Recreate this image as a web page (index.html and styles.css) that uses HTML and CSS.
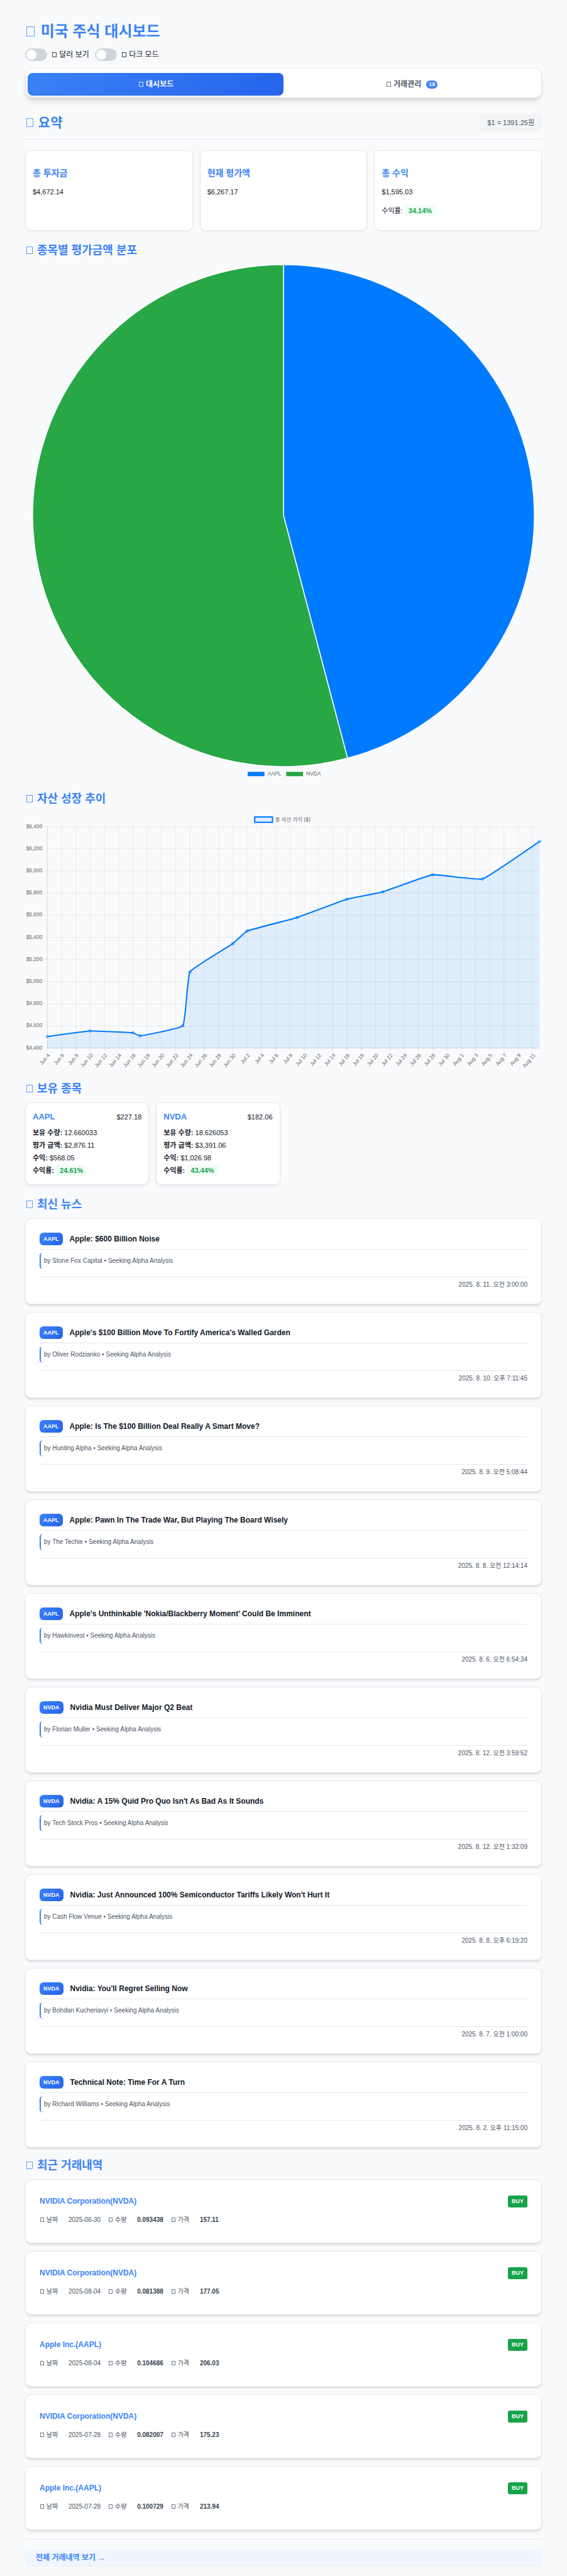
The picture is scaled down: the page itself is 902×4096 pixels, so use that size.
FILE: index.html
```html
<!DOCTYPE html>
<html lang="ko">
<head>
<meta charset="utf-8">
<meta name="viewport" content="width=device-width, initial-scale=1">
<title>미국 주식 대시보드</title>
<link rel="stylesheet" href="styles.css">
</head>
<body>
<main class="page">
  <header class="page-header">
    <h1 class="page-title"><i class="glyph"></i> 미국 주식 대시보드</h1>
    <div class="toggles">
      <label class="toggle"><input class="switch" type="checkbox"><span><i class="glyph"></i> 달러 보기</span></label>
      <label class="toggle"><input class="switch" type="checkbox"><span><i class="glyph"></i> 다크 모드</span></label>
    </div>
  </header>

  <nav class="tabs">
    <button class="tab tab-active" type="button"><span><i class="glyph"></i> 대시보드</span></button>
    <button class="tab" type="button"><span><i class="glyph"></i> 거래관리</span> <span class="tab-count">19</span></button>
  </nav>

  <section>
    <div class="summary-header">
      <h2 class="summary-title"><i class="glyph"></i> 요약</h2>
      <span class="rate">$1 = 1391.25원</span>
    </div>
    <div class="summary-grid">
      <article class="card summary-card"><h3>총 투자금</h3><p>$4,672.14</p></article>
      <article class="card summary-card"><h3>현재 평가액</h3><p>$6,267.17</p></article>
      <article class="card summary-card"><h3>총 수익</h3><p>$1,595.03</p><p class="rate-row">수익률: <span class="gain">34.14%</span></p></article>
    </div>
  </section>

  <section>
    <h2 class="section-title"><i class="glyph"></i> 종목별 평가금액 분포</h2>
    <svg class="chart" id="pie" viewBox="0 0 1168 1168" role="img" aria-label="종목별 평가금액 분포"></svg>
  </section>

  <section>
    <h2 class="section-title"><i class="glyph"></i> 자산 성장 추이</h2>
    <svg class="chart" id="growth" viewBox="0 0 1168 584" role="img" aria-label="자산 성장 추이"></svg>
  </section>

  <section>
    <h2 class="section-title"><i class="glyph"></i> 보유 종목</h2>
    <div class="holding-grid">
      <article class="card holding">
        <div class="holding-head"><h3>AAPL</h3><span>$227.18</span></div>
        <p><strong>보유 수량:</strong> 12.660033</p>
        <p><strong>평가 금액:</strong> $2,876.11</p>
        <p><strong>수익:</strong> $568.05</p>
        <p><strong>수익률:</strong> <span class="gain">24.61%</span></p>
      </article>
      <article class="card holding">
        <div class="holding-head"><h3>NVDA</h3><span>$182.06</span></div>
        <p><strong>보유 수량:</strong> 18.626053</p>
        <p><strong>평가 금액:</strong> $3,391.06</p>
        <p><strong>수익:</strong> $1,026.98</p>
        <p><strong>수익률:</strong> <span class="gain">43.44%</span></p>
      </article>
    </div>
  </section>

  <section>
    <h2 class="section-title"><i class="glyph"></i> 최신 뉴스</h2>
    <div class="stack">
      <article class="card news">
        <div class="news-head"><span class="ticker">AAPL</span><h3>Apple: $600 Billion Noise</h3></div>
        <p class="byline">by Stone Fox Capital • Seeking Alpha Analysis</p>
        <time class="news-time">2025. 8. 11. 오전 3:00:00</time>
      </article>
      <article class="card news">
        <div class="news-head"><span class="ticker">AAPL</span><h3>Apple's $100 Billion Move To Fortify America's Walled Garden</h3></div>
        <p class="byline">by Oliver Rodzianko • Seeking Alpha Analysis</p>
        <time class="news-time">2025. 8. 10. 오후 7:11:45</time>
      </article>
      <article class="card news">
        <div class="news-head"><span class="ticker">AAPL</span><h3>Apple: Is The $100 Billion Deal Really A Smart Move?</h3></div>
        <p class="byline">by Hunting Alpha • Seeking Alpha Analysis</p>
        <time class="news-time">2025. 8. 9. 오전 5:08:44</time>
      </article>
      <article class="card news">
        <div class="news-head"><span class="ticker">AAPL</span><h3>Apple: Pawn In The Trade War, But Playing The Board Wisely</h3></div>
        <p class="byline">by The Techie • Seeking Alpha Analysis</p>
        <time class="news-time">2025. 8. 8. 오전 12:14:14</time>
      </article>
      <article class="card news">
        <div class="news-head"><span class="ticker">AAPL</span><h3>Apple's Unthinkable 'Nokia/Blackberry Moment' Could Be Imminent</h3></div>
        <p class="byline">by Hawkinvest • Seeking Alpha Analysis</p>
        <time class="news-time">2025. 8. 6. 오전 6:54:34</time>
      </article>
      <article class="card news">
        <div class="news-head"><span class="ticker">NVDA</span><h3>Nvidia Must Deliver Major Q2 Beat</h3></div>
        <p class="byline">by Florian Muller • Seeking Alpha Analysis</p>
        <time class="news-time">2025. 8. 12. 오전 3:59:52</time>
      </article>
      <article class="card news">
        <div class="news-head"><span class="ticker">NVDA</span><h3>Nvidia: A 15% Quid Pro Quo Isn't As Bad As It Sounds</h3></div>
        <p class="byline">by Tech Stock Pros • Seeking Alpha Analysis</p>
        <time class="news-time">2025. 8. 12. 오전 1:32:09</time>
      </article>
      <article class="card news">
        <div class="news-head"><span class="ticker">NVDA</span><h3>Nvidia: Just Announced 100% Semiconductor Tariffs Likely Won't Hurt It</h3></div>
        <p class="byline">by Cash Flow Venue • Seeking Alpha Analysis</p>
        <time class="news-time">2025. 8. 8. 오후 6:19:20</time>
      </article>
      <article class="card news">
        <div class="news-head"><span class="ticker">NVDA</span><h3>Nvidia: You'll Regret Selling Now</h3></div>
        <p class="byline">by Bohdan Kucheriavyi • Seeking Alpha Analysis</p>
        <time class="news-time">2025. 8. 7. 오전 1:00:00</time>
      </article>
      <article class="card news">
        <div class="news-head"><span class="ticker">NVDA</span><h3>Technical Note: Time For A Turn</h3></div>
        <p class="byline">by Richard Williams • Seeking Alpha Analysis</p>
        <time class="news-time">2025. 8. 2. 오후 11:15:00</time>
      </article>
    </div>
  </section>

  <section>
    <h2 class="section-title"><i class="glyph"></i> 최근 거래내역</h2>
    <div class="stack">
      <article class="card trade">
        <div class="trade-head"><h3>NVIDIA Corporation(NVDA)</h3><span class="side">BUY</span></div>
        <dl class="trade-info"><dt><i class="glyph"></i> 날짜</dt><dd>2025-06-30</dd><dt><i class="glyph"></i> 수량</dt><dd class="num">0.093438</dd><dt><i class="glyph"></i> 가격</dt><dd class="num">157.11</dd></dl>
      </article>
      <article class="card trade">
        <div class="trade-head"><h3>NVIDIA Corporation(NVDA)</h3><span class="side">BUY</span></div>
        <dl class="trade-info"><dt><i class="glyph"></i> 날짜</dt><dd>2025-08-04</dd><dt><i class="glyph"></i> 수량</dt><dd class="num">0.081388</dd><dt><i class="glyph"></i> 가격</dt><dd class="num">177.05</dd></dl>
      </article>
      <article class="card trade">
        <div class="trade-head"><h3>Apple Inc.(AAPL)</h3><span class="side">BUY</span></div>
        <dl class="trade-info"><dt><i class="glyph"></i> 날짜</dt><dd>2025-08-04</dd><dt><i class="glyph"></i> 수량</dt><dd class="num">0.104686</dd><dt><i class="glyph"></i> 가격</dt><dd class="num">206.03</dd></dl>
      </article>
      <article class="card trade">
        <div class="trade-head"><h3>NVIDIA Corporation(NVDA)</h3><span class="side">BUY</span></div>
        <dl class="trade-info"><dt><i class="glyph"></i> 날짜</dt><dd>2025-07-28</dd><dt><i class="glyph"></i> 수량</dt><dd class="num">0.082007</dd><dt><i class="glyph"></i> 가격</dt><dd class="num">175.23</dd></dl>
      </article>
      <article class="card trade">
        <div class="trade-head"><h3>Apple Inc.(AAPL)</h3><span class="side">BUY</span></div>
        <dl class="trade-info"><dt><i class="glyph"></i> 날짜</dt><dd>2025-07-28</dd><dt><i class="glyph"></i> 수량</dt><dd class="num">0.100729</dd><dt><i class="glyph"></i> 가격</dt><dd class="num">213.94</dd></dl>
      </article>
    </div>
    <div class="more"><a class="more-link" href="#all">전체 거래내역 보기 →</a></div>
  </section>
</main>
<script src="charts.js"></script>
</body>
</html>
```
FILE: styles.css
```css
* { box-sizing: border-box; }

body {
  margin: 0;
  background: #f9fafc;
  color: #111827;
  font-family: "Liberation Sans", "Noto Sans CJK KR", sans-serif;
  font-size: 11px;
  line-height: 16px;
}

h1, h2, h3, p, dl, dd { margin: 0; }

.page { padding: 34px 40px 16px; }

/* Hollow box that stands before a label */
.glyph {
  display: inline-block;
  width: 7px;
  height: 8px;
  margin: 0 1px 0 2px;
  border: 1px solid currentColor;
  opacity: 0.8;
}

.page-title .glyph { width: 13px; height: 16px; margin-right: 3px; }
.summary-title .glyph { width: 11px; height: 14px; margin-right: 2px; }
.section-title .glyph { width: 10px; height: 12px; margin-right: 2px; }
.trade-info .glyph { width: 6px; height: 7px; margin: 0 1px; }

.page-title {
  color: #3b82f6;
  font-size: 24px;
  line-height: 32px;
}

.toggles {
  display: flex;
  gap: 9px;
  margin-top: 11px;
}

.toggle {
  display: flex;
  align-items: center;
  gap: 6px;
  font-size: 12px;
}

.switch {
  appearance: none;
  display: flex;
  align-items: center;
  width: 35px;
  height: 20px;
  margin: 0;
  padding: 0 2px;
  border-radius: 10px;
  background: #d1d5db;
}

.switch::before {
  content: "";
  width: 16px;
  height: 16px;
  border-radius: 50%;
  background: #fff;
}

.switch:checked { justify-content: flex-end; background: #3b82f6; }

.tabs {
  display: flex;
  margin-top: 11px;
  padding: 7px 3px 3px;
  border: 1px solid #e5e7eb;
  border-radius: 12px;
  background: #fff;
  box-shadow: 0 7px 11px -2px rgba(0, 0, 0, 0.1), 0 3px 4px -1px rgba(0, 0, 0, 0.08);
}

.tab {
  display: flex;
  flex: 1;
  align-items: center;
  justify-content: center;
  gap: 8px;
  height: 36px;
  padding: 0;
  border: 0;
  border-radius: 8px;
  background: none;
  color: #4b5563;
  font: 600 12px/16px "Liberation Sans", "Noto Sans CJK KR", sans-serif;
}

.tab-active {
  background: linear-gradient(135deg, #3b82f6, #2563eb);
  color: #fff;
  box-shadow: 0 3px 4px -1px rgba(0, 0, 0, 0.1);
}

.tab-count {
  padding: 0 4px;
  border-radius: 7px;
  background: #3b82f6;
  color: #fff;
  font-size: 9px;
  line-height: 13px;
}

.summary-header {
  display: flex;
  align-items: center;
  justify-content: space-between;
  margin-top: 24px;
  padding-bottom: 11px;
  border-bottom: 1px solid #e5e7eb;
}

.summary-title {
  color: #3b82f6;
  font-size: 21px;
  line-height: 28px;
}

.rate {
  padding: 7px 12px;
  border-radius: 6px;
  background: #f3f4f6;
  color: #4b5563;
}

.summary-grid {
  display: grid;
  grid-template-columns: repeat(3, 1fr);
  gap: 11px;
  padding: 17px 0 3px;
}

.card {
  border: 1px solid #e5e7eb;
  border-radius: 9px;
  background: #fff;
}

.summary-card {
  padding: 25px 11px 22px;
  box-shadow: 0 1px 3px rgba(0, 0, 0, 0.07);
}

.summary-card h3 {
  margin-bottom: 12px;
  color: #3b82f6;
  font-size: 14px;
  line-height: 20px;
}

.summary-card .rate-row { margin-top: 13px; line-height: 18px; }

.gain {
  display: inline-block;
  padding: 0 6px;
  border-radius: 4px;
  background: #f0fdf4;
  color: #16a34a;
  font-weight: 700;
  line-height: 18px;
}

.section-title {
  margin: 16px 0 10px;
  color: #3b82f6;
  font-size: 18px;
  line-height: 24px;
}

.chart {
  display: block;
  width: 100%;
  height: auto;
  font-size: 12px;
}

.chart text { fill: #666; }
.grid-line { stroke: rgba(0, 0, 0, 0.1); }
.slice { stroke: #fff; stroke-width: 2; }
.growth-line { fill: none; stroke: #007bff; stroke-width: 3; }
.growth-area { fill: rgba(0, 123, 255, 0.1); }
.growth-point { fill: rgba(0, 123, 255, 0.1); stroke: #007bff; }
.growth-key { fill: rgba(0, 123, 255, 0.1); stroke: #007bff; stroke-width: 3; }

.holding-grid {
  display: grid;
  grid-template-columns: repeat(4, 1fr);
  gap: 11px;
  padding-bottom: 3px;
}

.holding {
  padding: 13px 11px 12px;
  box-shadow: 0 2px 4px rgba(0, 0, 0, 0.07);
}

.holding-head {
  display: flex;
  align-items: center;
  justify-content: space-between;
  margin-bottom: 6px;
  line-height: 18px;
}

.holding-head h3 { color: #3b82f6; font-size: 13px; }
.holding p { line-height: 20px; }

.stack { display: grid; gap: 12px; }

.news, .trade {
  box-shadow: 0 3px 4px -1px rgba(0, 0, 0, 0.12), 0 1px 3px -1px rgba(0, 0, 0, 0.08);
}

.news { padding: 22px 22px 23px; }

.news-head {
  display: flex;
  align-items: center;
  gap: 11px;
  padding-bottom: 6px;
  border-bottom: 1px solid #e5e7eb;
}

.news-head h3 { font-size: 12px; line-height: 18px; }

.ticker {
  padding: 0 6px;
  border-radius: 6px;
  background: linear-gradient(135deg, #3b82f6, #2563eb);
  color: #fff;
  font-size: 9px;
  font-weight: 700;
  line-height: 20px;
}

.byline {
  margin: 5px 0 12px;
  padding-left: 5px;
  border-left: 2px solid #3b82f6;
  border-radius: 5px;
  color: #4b5563;
  font-size: 10px;
  line-height: 26px;
}

.news-time {
  display: block;
  padding-top: 5px;
  border-top: 1px solid #e5e7eb;
  color: #4b5563;
  font-size: 10px;
  line-height: 14px;
  text-align: right;
}

.trade { padding: 22px 22px 28px; }

.trade-head {
  display: flex;
  align-items: center;
  justify-content: space-between;
}

.trade-head h3 { color: #3b82f6; font-size: 12px; line-height: 24px; }

.side {
  padding: 0 6px;
  border-radius: 3px;
  background: #16a34a;
  color: #fff;
  font-size: 9px;
  font-weight: 700;
  line-height: 19px;
}

.trade-info {
  display: flex;
  margin-top: 10px;
  color: #4b5563;
  font-size: 10px;
}

.trade-info dt { width: 46px; }
.trade-info dd { margin-right: 12px; }
.trade-info .num { color: #374151; font-weight: 700; }

.more {
  margin-top: 14px;
  padding-top: 16px;
  border-top: 1px solid #e5e7eb;
}

.more-link {
  display: block;
  padding: 0 17px;
  border-radius: 6px;
  background: #eff6ff;
  box-shadow: 0 1px 2px rgba(0, 0, 0, 0.05);
  color: #3b82f6;
  font-size: 12px;
  font-weight: 600;
  line-height: 26px;
  text-decoration: none;
}
```
FILE: charts.js
```js
(function () {
  const SVG = "http://www.w3.org/2000/svg";

  function add(parent, name, attrs, text) {
    const el = document.createElementNS(SVG, name);
    for (const key in attrs) el.setAttribute(key, attrs[key]);
    if (text) el.textContent = text;
    parent.appendChild(el);
    return el;
  }

  // Pie of current value by ticker
  const pie = document.getElementById("pie");
  const slices = [
    { name: "AAPL", value: 2876.11, color: "#007bff", keyX: 502 },
    { name: "NVDA", value: 3391.06, color: "#28a745", keyX: 589 }
  ];
  const total = slices.reduce((sum, s) => sum + s.value, 0);
  const cx = 584, cy = 568, r = 567;
  let angle = 0;
  for (const s of slices) {
    const end = angle + (s.value / total) * 2 * Math.PI;
    const p = a => (cx + r * Math.sin(a)) + " " + (cy - r * Math.cos(a));
    const large = end - angle > Math.PI ? 1 : 0;
    add(pie, "path", {
      class: "slice", fill: s.color,
      d: `M${cx} ${cy}L${p(angle)}A${r} ${r} 0 ${large} 1 ${p(end)}Z`
    });
    add(pie, "rect", { class: "slice", fill: s.color, x: s.keyX, y: 1146, width: 40, height: 12 });
    add(pie, "text", { x: s.keyX + 46, y: 1155 }, s.name);
    angle = end;
  }

  // Growth of the total asset value
  const growth = document.getElementById("growth");
  const left = 50, right = 1163, top = 32, bottom = 532;
  const day = (right - left) / 69;
  const yOf = v => bottom - (v - 4400) / 2000 * (bottom - top);

  for (let v = 6400; v >= 4400; v -= 200) {
    const y = yOf(v);
    add(growth, "line", { class: "grid-line", x1: left - 8, x2: right, y1: y, y2: y });
    add(growth, "text", { x: left - 11, y: y + 3, "text-anchor": "end" }, "$" + v.toLocaleString("en-US"));
  }
  for (let d = 0; d < 69; d += 2) {
    const x = left + d * day;
    const date = new Date(2025, 5, 4 + d);
    const label = ["Jun", "Jul", "Aug"][date.getMonth() - 5] + " " + date.getDate();
    add(growth, "line", { class: "grid-line", x1: x, x2: x, y1: top, y2: bottom + 8 });
    add(growth, "text", { transform: `translate(${x} 543) rotate(-50)`, y: 9, "text-anchor": "end" }, label);
  }
  add(growth, "line", { class: "grid-line", x1: left, x2: left, y1: top, y2: bottom });
  add(growth, "line", { class: "grid-line", x1: left, x2: right, y1: bottom, y2: bottom });

  const tension = 0.1;
  const pts = [
    [0, 4504], [6, 4554], [12, 4537], [13, 4510], [19, 4602], [20, 5088], [26, 5344],
    [28, 5457], [35, 5579], [42, 5745], [47, 5811], [54, 5966], [61, 5928], [69, 6267]
  ].map(([d, v]) => [left + d * day, yOf(v)]);

  const handles = pts.map((p, i) => {
    const a = pts[i - 1] || p, b = pts[i + 1] || p;
    const da = Math.hypot(p[0] - a[0], p[1] - a[1]);
    const db = Math.hypot(b[0] - p[0], b[1] - p[1]);
    const ta = tension * da / (da + db), tb = tension * db / (da + db);
    const dx = b[0] - a[0], dy = b[1] - a[1];
    return [[p[0] - ta * dx, p[1] - ta * dy], [p[0] + tb * dx, p[1] + tb * dy]];
  });
  let path = "M" + pts[0];
  for (let i = 1; i < pts.length; i++) path += "C" + [handles[i - 1][1], handles[i][0], pts[i]].join(" ");

  add(growth, "path", { class: "growth-area", d: `${path}V${bottom}H${left}Z` });
  add(growth, "path", { class: "growth-line", d: path });
  for (const [x, y] of pts) add(growth, "circle", { class: "growth-point", cx: x, cy: y, r: 3 });
  add(growth, "rect", { class: "growth-key", x: 519, y: 10, width: 40, height: 12 });
  add(growth, "text", { x: 565, y: 20 }, "총 자산 가치 ($)");
})();
```
